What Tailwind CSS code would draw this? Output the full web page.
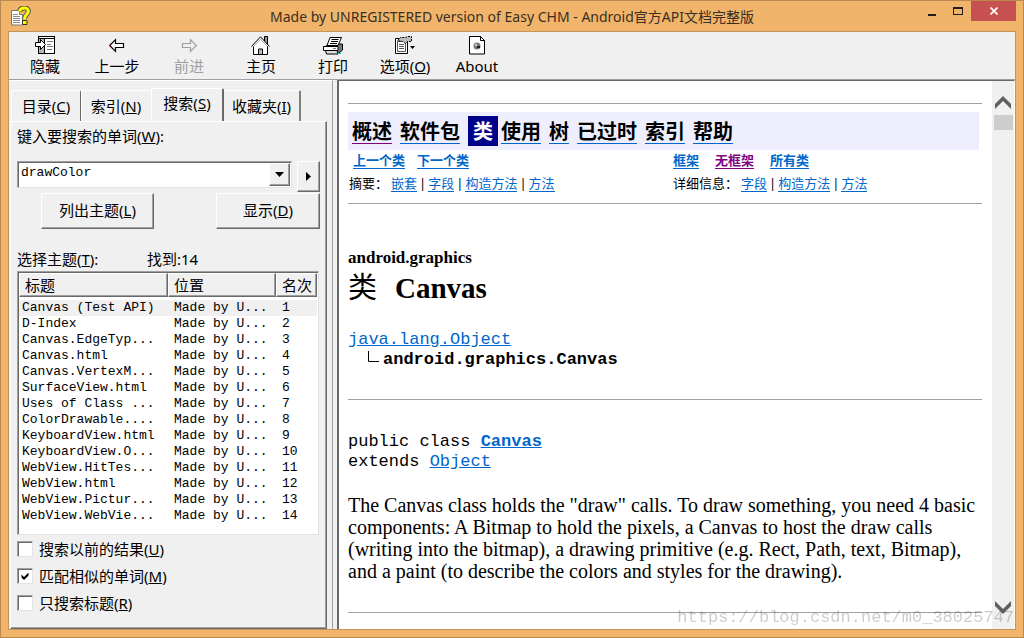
<!DOCTYPE html>
<html lang="zh-CN">
<head>
    <meta charset="UTF-8">
    <meta name="viewport" content="width=device-width, initial-scale=1.0">
    <title>Made by UNREGISTERED version of Easy CHM - Android官方API文档完整版</title>
    <script src="https://cdn.jsdelivr.net/npm/@tailwindcss/browser@4"></script>
</head>
<body class="bg-[#f0b46a] font-['Noto_Sans','Noto_Sans_CJK_SC',sans-serif] text-black">
    <div class="h-screen flex flex-col border border-[#b9894f] px-[7px] pb-[7px]">

        <!-- Title bar -->
        <header class="h-[30px] shrink-0 grid grid-cols-[1fr_auto_1fr]">
            <div class="pl-[3px] pt-[5px]">
                <svg width="20" height="20" viewBox="0 0 20 20" aria-hidden="true">
                    <path d="M.5 4.500h8v4h3v10.500h-11z" fill="#fff" stroke="#777"/>
                    <path d="M2 8.500h5M2 10.500h7M2 12.500h7M2 14.500h7M2 16.500h7" stroke="#8a8a8a"/>
                    <path d="M8.500 5.500C9 2.500 11.500 2 13.500 2C16.500 2 18 4 17 6.500C16 8.500 13.500 9.500 13.500 13" fill="none" stroke="#555" stroke-width="5"/>
                    <path d="M8.500 5.500C9 2.500 11.500 2 13.500 2C16.500 2 18 4 17 6.500C16 8.500 13.500 9.500 13.500 13" fill="none" stroke="#ff0" stroke-width="3"/>
                    <path d="M11.500 14.500h4.500v4h-4.500z" fill="#ff0" stroke="#333"/>
                </svg>
            </div>
            <h1 class="pt-1 text-sm leading-6 text-[#3b2f22] whitespace-nowrap">Made by UNREGISTERED version of Easy CHM - Android官方API文档完整版</h1>
            <div class="flex justify-end items-start">
                <button type="button" aria-label="Minimize" class="w-[26px] h-5 grid place-items-center">
                    <svg width="10" height="10" viewBox="0 0 10 10"><path d="M1 8h8v2H1z" fill="#1e1e1e"/></svg>
                </button>
                <button type="button" aria-label="Maximize" class="w-[26px] h-5 grid place-items-center">
                    <svg width="10" height="10" viewBox="0 0 10 10"><path d="M0 1h10v8H0zM1 3v5h8V3z" fill="#1e1e1e" fill-rule="evenodd"/></svg>
                </button>
                <button type="button" aria-label="Close" class="w-[45px] h-5 grid place-items-center bg-[#c75050]">
                    <svg width="8" height="8" viewBox="0 0 8 8"><path d="M.5 .5l7 7M7.500 .5l-7 7" stroke="#fff" stroke-width="1.700"/></svg>
                </button>
            </div>
        </header>

        <div class="flex-1 min-h-0 flex flex-col bg-[#f0f0f0] border border-[#c4955a]">

            <!-- Toolbar -->
            <nav class="h-12 shrink-0 flex border-b border-[#a0a0a0] text-[15px] leading-5">
                <button type="button" class="w-[72px] pt-1 flex flex-col items-center gap-px">
                    <svg width="20" height="19" viewBox="0 0 20 19" shape-rendering="crispEdges">
                        <path d="M3.500 .5h16v17h-16z" fill="#fff" stroke="#000"/>
                        <path d="M4 2h5v15H4z" fill="#b8b8b8"/>
                        <path d="M3 2.500h16M9.500 2v15" stroke="#000"/>
                        <path d="M12 5.500h6M12 8.500h4M12 10.500h6M12 13.500h5" stroke="#777"/>
                        <path d="M.5 6.500h5v-3l5 5l-5 5v-3h-5z" fill="#fff" stroke="#000" shape-rendering="auto"/>
                    </svg>
                    <span>隐藏</span>
                </button>
                <button type="button" class="w-[72px] pt-1 flex flex-col items-center gap-px">
                    <svg width="16" height="19" viewBox="0 0 16 19">
                        <path d="M.7 9.500l5.800-5.800v3.800h8v4h-8v3.800z" fill="#fff" stroke="#000" stroke-width="1.200"/>
                        <path d="M0 9h2v1H0z" fill="#b00"/>
                    </svg>
                    <span>上一步</span>
                </button>
                <button type="button" disabled class="w-[72px] pt-1 flex flex-col items-center gap-px text-[#a0a0a0]">
                    <svg width="16" height="19" viewBox="0 0 16 19">
                        <path d="M15.300 9.500l-5.800-5.800v3.800h-8v4h8v3.800z" fill="none" stroke="currentColor" stroke-width="1.200"/>
                    </svg>
                    <span>前进</span>
                </button>
                <button type="button" class="w-[72px] pt-1 flex flex-col items-center gap-px">
                    <svg width="20" height="19" viewBox="0 0 20 19">
                        <path d="M13.500 5V.5h3V8" fill="#999" stroke="#000"/>
                        <path d="M2.500 18.500v-9l7-8l7 8v9z" fill="#fff"/>
                        <path d="M2.500 10v8.500h14V10" fill="none" stroke="#000"/>
                        <path d="M.5 10.500L9.500 .8L18.500 10.500" fill="none" stroke="#000"/>
                        <path d="M2.500 10.500L9.500 3.200L16.500 10.500" fill="none" stroke="#aaa"/>
                        <path d="M7.500 18.500v-5.500h4v5.500z" fill="#bbb" stroke="#000"/>
                    </svg>
                    <span>主页</span>
                </button>
                <button type="button" class="w-[72px] pt-1 flex flex-col items-center gap-px">
                    <svg width="20" height="19" viewBox="0 0 20 19">
                        <path d="M3 10l3-2h13.500v6l-4 3.500" fill="#777" stroke="#000"/>
                        <path d="M4 9.500L7 1.500h11.500l-3.500 8z" fill="#fff" stroke="#000"/>
                        <path d="M8.500 3.500h7M8 5.500h7M7 7.500h7" stroke="#000"/>
                        <path d="M.5 10.500h14.500v4H.5z" fill="#fff" stroke="#000"/>
                        <path d="M2.500 14.500h11.500l1 3.500H3.500z" fill="#ddd" stroke="#000"/>
                        <path d="M15 17h3v1h-3z" fill="#0cc"/>
                        <path d="M10 12h3v1h-3z" fill="#777"/>
                    </svg>
                    <span>打印</span>
                </button>
                <button type="button" class="w-[72px] pt-1 flex flex-col items-center gap-px">
                    <svg width="20" height="19" viewBox="0 0 20 19">
                        <path d="M.5 2.500h12v15H.5z" fill="#fff" stroke="#000"/>
                        <path d="M2.500 5.500h8v10h-8z" fill="#fff" stroke="#555"/>
                        <path d="M4 8.500h5M4 10.500h5M4 12.500h5" stroke="#555"/>
                        <path d="M2.500 4.500l3-3h5l2-1h4v5h-4l-2 2l-3-2z" fill="#bbb" stroke="#000" stroke-dasharray="2 1"/>
                        <path d="M15 10h5l-2.500 3z" fill="#000"/>
                    </svg>
                    <span>选项(<u>O</u>)</span>
                </button>
                <button type="button" class="w-[72px] pt-1 flex flex-col items-center gap-px">
                    <svg width="16" height="19" viewBox="0 0 16 19">
                        <path d="M.5 .5h11l4 4v13.500h-15z" fill="#fff" stroke="#000"/>
                        <path d="M11.500 .5v4h4" fill="none" stroke="#000"/>
                        <circle cx="8" cy="10" r="3.500" fill="#777"/>
                        <path d="M6 8h2v2H6z" fill="#ccc"/>
                        <path d="M8 10h3v2H8z" fill="#222"/>
                    </svg>
                    <span>About</span>
                </button>
            </nav>

            <div class="flex-1 min-h-0 flex">

                <!-- Search pane -->
                <aside class="w-[324px] shrink-0 flex flex-col border-t border-r border-t-white border-r-[#a0a0a0] pl-px pr-[5px] pt-[7px] text-[15px] leading-5">
                    <div role="tablist" class="flex items-end pl-px">
                        <button type="button" role="tab" class="w-[70px] h-[31px] pb-px border border-b-0 border-t-white border-l-white border-r-[#696969] rounded-t-xs">目录(<u>C</u>)</button>
                        <button type="button" role="tab" class="w-[70px] h-[31px] pb-px border border-b-0 border-t-white border-l-white border-r-transparent rounded-t-xs">索引(<u>N</u>)</button>
                        <button type="button" role="tab" aria-selected="true" class="w-[73px] h-[33px] pb-1 border border-b-0 border-t-white border-l-white border-r-2 border-r-[#696969] rounded-t-xs">搜索(<u>S</u>)</button>
                        <button type="button" role="tab" class="w-[77px] h-[31px] pb-px border border-b-0 border-t-white border-l-0 border-r-2 border-r-[#808080] rounded-t-xs">收藏夹(<u>I</u>)</button>
                    </div>

                    <form class="flex-1 min-h-0 border border-t-white border-l-white border-r-[#696969] border-b-[#696969] shadow-[inset_-1px_-1px_0_#a0a0a0] px-[6px] pt-1">
                        <label for="keyword" class="block">键入要搜索的单词(<u>W</u>):</label>
                        <div class="mt-[15px] flex items-start gap-[5px]">
                            <div class="flex-1 h-[27px] flex bg-white border border-t-[#a0a0a0] border-l-[#a0a0a0] border-r-[#e3e3e3] border-b-[#e3e3e3] shadow-[inset_1px_1px_0_#696969]">
                                <input id="keyword" type="text" value="drawColor" class="flex-1 min-w-0 pl-[3px] pb-1 bg-transparent font-['Liberation_Mono',monospace] text-[13px] leading-4 outline-none">
                                <button type="button" aria-label="Recent searches" class="w-[21px] m-px bg-[#f0f0f0] grid place-items-center border border-t-white border-l-white border-r-[#696969] border-b-[#696969] shadow-[inset_-1px_-1px_0_#a0a0a0]">
                                    <svg width="9" height="5" viewBox="0 0 9 5"><path d="M0 0h9L4.500 5z"/></svg>
                                </button>
                            </div>
                            <button type="button" aria-label="Operators" class="w-[23px] h-[31px] grid place-items-center border border-t-white border-l-white border-r-[#696969] border-b-[#696969] shadow-[inset_-1px_-1px_0_#a0a0a0]">
                                <svg width="5" height="9" viewBox="0 0 5 9"><path d="M0 0v9L5 4.500z"/></svg>
                            </button>
                        </div>
                        <div class="mt-px pl-6 flex justify-between">
                            <button type="button" class="w-[113px] h-9 pb-0.5 border border-t-white border-l-white border-r-[#696969] border-b-[#696969] shadow-[inset_-1px_-1px_0_#a0a0a0]">列出主题(<u>L</u>)</button>
                            <button type="button" class="w-[104px] h-9 pb-0.5 border border-t-white border-l-white border-r-[#696969] border-b-[#696969] shadow-[inset_-1px_-1px_0_#a0a0a0]">显示(<u>D</u>)</button>
                        </div>
                        <div class="mt-5 flex">
                            <span id="topics-label" class="w-[130px]">选择主题(<u>T</u>):</span>
                            <span>找到:14</span>
                        </div>

                        <div class="mt-0.5 mr-px h-[264px] bg-white border border-t-[#a0a0a0] border-l-[#a0a0a0] border-r-[#e3e3e3] border-b-[#e3e3e3] shadow-[inset_1px_1px_0_#696969] p-px">
                            <table aria-labelledby="topics-label" class="w-full table-fixed border-separate border-spacing-0 text-left">
                                <thead class="bg-[#f0f0f0] leading-[22px]">
                                    <tr>
                                        <th class="w-[149px] pl-[5px] font-normal border border-t-white border-l-white border-r-[#696969] border-b-[#696969] shadow-[inset_-1px_-1px_0_#a0a0a0]">标题</th>
                                        <th class="w-[108px] pl-[5px] font-normal border border-t-white border-l-white border-r-[#696969] border-b-[#696969] shadow-[inset_-1px_-1px_0_#a0a0a0]">位置</th>
                                        <th class="pl-[5px] font-normal border border-t-white border-l-white border-r-[#696969] border-b-[#696969] shadow-[inset_-1px_-1px_0_#a0a0a0]">名次</th>
                                    </tr>
                                </thead>
                                <tbody class="font-['Liberation_Mono',monospace] text-[13px] leading-4 whitespace-nowrap before:block before:h-[3px]">
                                    <tr class="bg-[#f0f0f0]"><td class="pl-[3px]">Canvas (Test API)</td><td class="pl-[6px]">Made by U...</td><td class="pl-[6px]">1</td></tr>
                                    <tr><td class="pl-[3px]">D-Index</td><td class="pl-[6px]">Made by U...</td><td class="pl-[6px]">2</td></tr>
                                    <tr><td class="pl-[3px]">Canvas.EdgeTyp...</td><td class="pl-[6px]">Made by U...</td><td class="pl-[6px]">3</td></tr>
                                    <tr><td class="pl-[3px]">Canvas.html</td><td class="pl-[6px]">Made by U...</td><td class="pl-[6px]">4</td></tr>
                                    <tr><td class="pl-[3px]">Canvas.VertexM...</td><td class="pl-[6px]">Made by U...</td><td class="pl-[6px]">5</td></tr>
                                    <tr><td class="pl-[3px]">SurfaceView.html</td><td class="pl-[6px]">Made by U...</td><td class="pl-[6px]">6</td></tr>
                                    <tr><td class="pl-[3px]">Uses of Class ...</td><td class="pl-[6px]">Made by U...</td><td class="pl-[6px]">7</td></tr>
                                    <tr><td class="pl-[3px]">ColorDrawable....</td><td class="pl-[6px]">Made by U...</td><td class="pl-[6px]">8</td></tr>
                                    <tr><td class="pl-[3px]">KeyboardView.html</td><td class="pl-[6px]">Made by U...</td><td class="pl-[6px]">9</td></tr>
                                    <tr><td class="pl-[3px]">KeyboardView.O...</td><td class="pl-[6px]">Made by U...</td><td class="pl-[6px]">10</td></tr>
                                    <tr><td class="pl-[3px]">WebView.HitTes...</td><td class="pl-[6px]">Made by U...</td><td class="pl-[6px]">11</td></tr>
                                    <tr><td class="pl-[3px]">WebView.html</td><td class="pl-[6px]">Made by U...</td><td class="pl-[6px]">12</td></tr>
                                    <tr><td class="pl-[3px]">WebView.Pictur...</td><td class="pl-[6px]">Made by U...</td><td class="pl-[6px]">13</td></tr>
                                    <tr><td class="pl-[3px]">WebView.WebVie...</td><td class="pl-[6px]">Made by U...</td><td class="pl-[6px]">14</td></tr>
                                </tbody>
                            </table>
                        </div>

                        <div class="mt-1 flex flex-col gap-[7px]">
                            <label class="flex items-center gap-[6px]">
                                <input type="checkbox" class="size-4 appearance-none bg-white border border-t-[#a0a0a0] border-l-[#a0a0a0] border-r-[#e3e3e3] border-b-[#e3e3e3] shadow-[inset_1px_1px_0_#696969]">
                                <span>搜索以前的结果(<u>U</u>)</span>
                            </label>
                            <label class="flex items-center gap-[6px]">
                                <span class="grid">
                                    <input type="checkbox" checked class="peer [grid-area:1/1] size-4 appearance-none bg-white border border-t-[#a0a0a0] border-l-[#a0a0a0] border-r-[#e3e3e3] border-b-[#e3e3e3] shadow-[inset_1px_1px_0_#696969]">
                                    <svg class="[grid-area:1/1] place-self-center invisible peer-checked:visible pointer-events-none" width="8" height="8" viewBox="0 0 8 8"><path d="M.5 2.500L3 5L7.500 .5v3L3 8L.5 5.500z"/></svg>
                                </span>
                                <span>匹配相似的单词(<u>M</u>)</span>
                            </label>
                            <label class="flex items-center gap-[6px]">
                                <input type="checkbox" class="size-4 appearance-none bg-white border border-t-[#a0a0a0] border-l-[#a0a0a0] border-r-[#e3e3e3] border-b-[#e3e3e3] shadow-[inset_1px_1px_0_#696969]">
                                <span>只搜索标题(<u>R</u>)</span>
                            </label>
                        </div>
                    </form>
                </aside>

                <!-- Document pane -->
                <div class="flex-1 min-w-0 ml-1 flex bg-white border-t border-l-2 border-t-[#696969] border-l-[#696969] border-r border-r-white">
                    <main class="flex-1 min-w-0 overflow-hidden pl-[9px] pr-[10px] pt-[22px] font-['Liberation_Serif','Noto_Sans_CJK_SC',serif]">
                        <hr class="border-[#a0a0a0]">
                        <div class="mt-2 mr-[3px] h-[38px] pl-1 flex items-center gap-2 bg-[#eeeeff] font-['Noto_Sans_CJK_SC',sans-serif] text-xl leading-6 font-bold whitespace-nowrap">
                            <a href="#" class="border-b border-[#800080]">概述</a>
                            <a href="#" class="border-b border-[#0066cc]">软件包</a>
                            <span class="-mr-[5px] bg-[#00008b] text-white px-[5px] py-[3px]">类</span>
                            <a href="#" class="border-b border-[#0066cc]">使用</a>
                            <a href="#" class="border-b border-[#0066cc]">树</a>
                            <a href="#" class="border-b border-[#0066cc]">已过时</a>
                            <a href="#" class="border-b border-[#0066cc]">索引</a>
                            <a href="#" class="border-b border-[#0066cc]">帮助</a>
                        </div>
                        <div class="grid grid-cols-[324px_1fr] font-['Noto_Sans','Noto_Sans_CJK_SC',sans-serif] text-[13px] leading-[16px] whitespace-nowrap">
                            <div class="h-5 pl-[5px] flex items-center gap-3 font-bold text-[#0066cc]">
                                <a href="#" class="border-b">上一个类</a>
                                <a href="#" class="border-b">下一个类</a>
                            </div>
                            <div class="h-5 pl-px flex items-center gap-4 font-bold text-[#0066cc]">
                                <a href="#" class="border-b">框架</a>
                                <a href="#" class="border-b border-[#800080] text-[#800080]">无框架</a>
                                <a href="#" class="border-b">所有类</a>
                            </div>
                            <div class="h-[26px] pl-px flex items-center gap-0.5">
                                <span class="mr-px">摘要：</span>
                                <a href="#" class="border-b text-[#0066cc]">嵌套</a><span>|</span>
                                <a href="#" class="border-b text-[#0066cc]">字段</a><span>|</span>
                                <a href="#" class="border-b text-[#0066cc]">构造方法</a><span>|</span>
                                <a href="#" class="border-b text-[#0066cc]">方法</a>
                            </div>
                            <div class="h-[26px] pl-px flex items-center gap-0.5">
                                <span class="mr-px">详细信息：</span>
                                <a href="#" class="border-b text-[#0066cc]">字段</a><span>|</span>
                                <a href="#" class="border-b text-[#0066cc]">构造方法</a><span>|</span>
                                <a href="#" class="border-b text-[#0066cc]">方法</a>
                            </div>
                        </div>
                        <hr class="mt-[7px] border-[#a0a0a0]">

                        <p class="mt-11 text-[17px] leading-5 font-bold">android.graphics</p>
                        <h2 class="flex gap-[18px] text-[29px] leading-10 font-bold"><span class="font-normal">类</span>Canvas</h2>

                        <div class="mt-[22px] font-['Liberation_Mono',monospace] text-[17px] leading-5">
                            <a href="#" class="text-[#0066cc] underline">java.lang.Object</a>
                            <div class="pl-5 flex gap-1 font-bold">
                                <svg width="11" height="12" viewBox="0 0 11 12" aria-hidden="true"><path d="M.5 1v10.500h10.500" fill="none" stroke="#000"/></svg>
                                <span>android.graphics.Canvas</span>
                            </div>
                        </div>
                        <hr class="mt-[29px] border-[#a0a0a0]">

                        <div class="mt-8 font-['Liberation_Mono',monospace] text-[17px] leading-5">
                            <p>public class <a href="#" class="font-bold text-[#0066cc] underline">Canvas</a></p>
                            <p>extends <a href="#" class="text-[#0066cc] underline">Object</a></p>
                        </div>
                        <p class="mt-[22px] text-xl leading-[22px]">The Canvas class holds the "draw" calls. To draw something, you need 4 basic components: A Bitmap to hold the pixels, a Canvas to host the draw calls (writing into the bitmap), a drawing primitive (e.g. Rect, Path, text, Bitmap), and a paint (to describe the colors and styles for the drawing).</p>
                        <hr class="mt-[30px] border-[#a0a0a0]">
                    </main>

                    <!-- Scroll bar -->
                    <div class="w-[22px] shrink-0 flex flex-col items-center bg-[#f0f0f0] py-[15px]">
                        <svg width="16" height="13" viewBox="0 0 16 13" aria-hidden="true"><path d="M0 8L8 0l8 8v5L8 5L0 13z" fill="#606060"/></svg>
                        <div class="mt-[6px] w-[19px] h-[15px] bg-[#cdcdcd]"></div>
                        <svg class="mt-auto" width="16" height="13" viewBox="0 0 16 13" aria-hidden="true"><path d="M0 0L8 8l8-8v5L8 13L0 5z" fill="#606060"/></svg>
                    </div>
                </div>
            </div>
        </div>
    </div>

    <div class="fixed right-2.5 bottom-2 font-['Liberation_Mono',monospace] text-[17px] leading-6 text-black/20 pointer-events-none">https://blog.csdn.net/m0_38025747</div>
</body>
</html>
